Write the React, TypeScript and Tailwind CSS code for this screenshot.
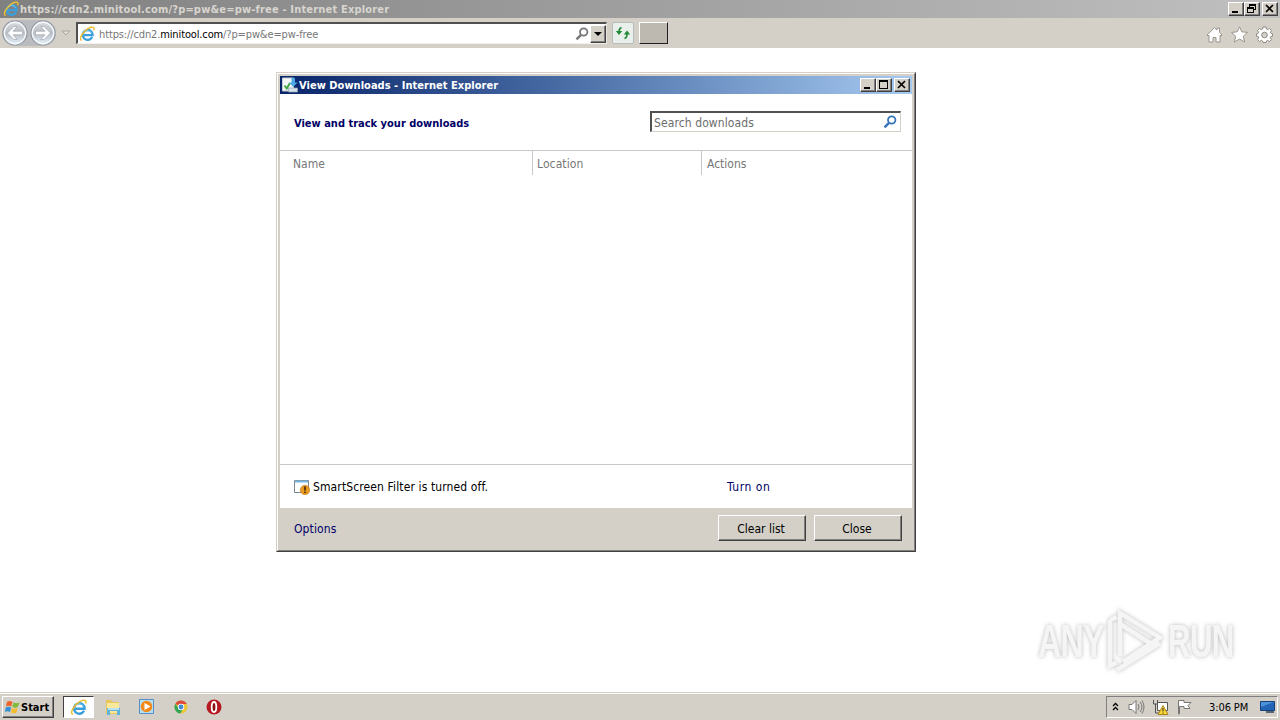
import type { ReactNode } from "react";

const raised =
  "border border-t-white border-l-white border-r-[#404040] border-b-[#404040] shadow-[inset_-1px_-1px_0_#808080] bg-[#d4d0c8]";

function IeLogo({ size }: { size: number }) {
  return (
    <svg width={size} height={size} viewBox="0 0 16 16" className="shrink-0">
      <path d="M13.2 11.1A5 4.9 0 1 1 13.7 9.2H5" fill="none" stroke="#3a9fdc" strokeWidth="2.3" />
      <path d="M4.3 7.5A4.8 4.8 0 0 1 12.8 6.8" fill="none" stroke="#7dcdf3" strokeWidth=".9" />
      <path d="M2.6 14.6C-1.3 12.8 6 2.6 12.4 1.2c2.7-.5 3.1 1.2 2.2 3.2" fill="none" stroke="#eebd30" strokeWidth="1.4" />
    </svg>
  );
}

function Magnifier({ color }: { color: string }) {
  return (
    <svg width="14" height="14" viewBox="0 0 14 14" className="shrink-0">
      <circle cx="8.7" cy="5" r="3.7" fill="#fff" stroke={color} strokeWidth="1.8" />
      <path d="M6 7.8 1.5 12.4" stroke={color} strokeWidth="2.4" />
    </svg>
  );
}

function CaptionButton({ children }: { children: ReactNode }) {
  return (
    <div className={`h-[14px] w-4 shrink-0 ${raised}`}>
      <svg width="14" height="12" viewBox="0 0 14 12" fill="none" stroke="#000" shapeRendering="crispEdges">
        {children}
      </svg>
    </div>
  );
}

const minimize = <path d="M3 9h6" strokeWidth="2" />;
const maximize = <path d="M2.5 1.5h8v8h-8zM2 2.5h9" />;
const restore = <path d="M4.5 4V1.5h6v5H8M4 2.5h7M2.5 4.5H8.5v5H2.5zM2 5.5h6" />;
const close = <path d="m3 2 7 7M10 2 3 9" strokeWidth="1.7" shapeRendering="auto" />;

function NavArrow({ back }: { back?: boolean }) {
  return (
    <svg width="26" height="26" viewBox="0 0 26 26" className={back ? "shrink-0" : "shrink-0 -scale-x-100"}>
      <defs>
        <linearGradient id={back ? "navB" : "navF"} x1="0" y1="0" x2="0" y2="1">
          <stop offset="0" stopColor="#dcdfe2" />
          <stop offset=".5" stopColor="#b8bdc3" />
          <stop offset="1" stopColor="#e6f4ff" />
        </linearGradient>
      </defs>
      <circle cx="13" cy="13" r="12" fill={back ? "url(#navB)" : "url(#navF)"} stroke="#8d959e" strokeWidth="1.1" />
      <circle cx="13" cy="13" r="10.7" fill="none" stroke="#f4f8fc" strokeWidth="1.4" />
      <path d="M5.5 13 12 6.5h3.2L11 11.2h9.500v3.6H11l4.2 4.7H12z" fill="#fff" stroke="#a2a8b0" strokeWidth=".7" />
    </svg>
  );
}

function TitleBar() {
  return (
    <div className="flex h-[18px] items-center bg-linear-to-r from-[#808080] to-[#c0c0c0] pr-0.5 pl-[3px]">
      <IeLogo size={16} />
      <span className="ml-px text-[11px] font-bold tracking-[0.18px] text-[#d8d5cf]">
        https://cdn2.minitool.com/?p=pw&amp;e=pw-free - Internet Explorer
      </span>
      <div className="ml-auto flex">
        <CaptionButton>{minimize}</CaptionButton>
        <CaptionButton>{restore}</CaptionButton>
        <div className="w-0.5" />
        <CaptionButton>{close}</CaptionButton>
      </div>
    </div>
  );
}

function Toolbar() {
  return (
    <div className="flex h-[30px] items-center bg-[#d4d0c8] pl-0.5">
      <div className="flex gap-0.5 rounded-full bg-[#b9bbbe]">
        <NavArrow back />
        <NavArrow />
      </div>
      <svg width="10" height="6" viewBox="0 0 10 6" className="ml-[5px]">
        <path d="M1 1h8L5 5z" fill="#e2dfd9" stroke="#aaa59c" />
      </svg>
      <div className="ml-[5px] flex h-[22px] w-[531px] items-center border-t-2 border-r border-b border-l-2 border-t-[#505050] border-r-[#e8e5df] border-b-[#f3f1ed] border-l-[#505050] bg-white pl-px">
        <IeLogo size={16} />
        <span className="ml-1 pt-px text-[11px] tracking-[-0.13px] text-[#777]">
          https://cdn2.<span className="text-black">minitool.com</span>/?p=pw&amp;e=pw-free
        </span>
        <div className="ml-auto flex items-center gap-px">
          <Magnifier color="#777" />
          <div className={`grid h-[18px] w-4 place-items-center ${raised}`}>
            <svg width="8" height="4" viewBox="0 0 8 4"><path d="M0 0h8L4 4z" /></svg>
          </div>
        </div>
      </div>
      <div className="ml-[5px] grid h-[22px] w-[22px] place-items-center rounded-xs border border-[#b7bdbd] bg-[#e9efeb]">
        <svg width="16" height="14" viewBox="0 0 16 14" fill="none" stroke="#238a38" strokeWidth="1.7">
          <path d="M6.5 1.5C4.5 2 4 3 4 6M9.5 12.5c2-.5 2.5-1.5 2.5-5" />
          <path d="m.8 5 3.2 4 3.2-4zM8.8 8.5 12 4.5l3.2 4z" fill="#238a38" stroke="none" />
        </svg>
      </div>
      <div className="ml-[5px] h-[22px] w-[29px] border border-t-white border-r-[#202020] border-b-[#202020] border-l-white bg-[#bdb8b0]" />
      <div className="mt-[3px] mr-[7px] ml-auto flex gap-2">
        <svg width="17" height="17" viewBox="0 0 17 17" fill="#fff" stroke="#9a968f">
          <path d="m1 9 7.5-7.3L11 4V2h2.5v4.5L16 9l-1 1-1-.7V16H10v-4.5H7V16H3V9.3L2 10z" />
        </svg>
        <svg width="17" height="17" viewBox="0 0 17 17" fill="#fff" stroke="#9a968f">
          <path d="m8.5 .8 2.3 5 5.7.6-4.2 3.9 1.3 5.7-5.1-3-5.1 3 1.3-5.7L.5 6.4l5.7-.6z" />
        </svg>
        <svg width="17" height="17" viewBox="0 0 17 17" fill="#fff" stroke="#8f8b84">
          <path d="M7 1h3l.4 2 1.3.6L13.5 2.5l2 2-1.1 1.8.6 1.2 1.5.3v2.4l-1.7.4-.5 1.3 1.2 1.7-2 2-1.8-1.2-1.3.6L10 16.5H7L6.6 15l-1.3-.6-1.8 1.2-2-2 1.2-1.7-.5-1.3L.5 10.2V7.8L2 7.5l.6-1.2L1.5 4.5l2-2 1.8 1.1L6.6 3z" />
          <circle cx="8.5" cy="9" r="2.8" fill="#d4d0c8" />
        </svg>
      </div>
    </div>
  );
}

function PushButton({ label }: { label: string }) {
  return (
    <button className={`h-[26px] w-[88px] pt-px pr-0.5 text-[12px] ${raised}`}>{label}</button>
  );
}

function DownloadsDialog() {
  return (
    <div className="absolute top-[72px] left-[276px] h-[480px] w-[640px] border border-t-[#d4d0c8] border-r-[#404040] border-b-[#404040] border-l-[#d4d0c8]">
      <div className="flex h-full flex-col border border-t-white border-r-[#808080] border-b-[#808080] border-l-white bg-[#d4d0c8] p-0.5">
        <div className="flex h-[18px] shrink-0 items-center bg-linear-to-r from-[#0a246a] to-[#a6caf0] pr-0.5 pl-0.5">
          <svg width="16" height="16" viewBox="0 0 16 16" className="shrink-0">
            <path d="M.5 1h11v13H.5z" fill="#f4f7f8" stroke="#c5ced3" />
            <path d="m2.5 8.500 2.200 3L8 6" fill="none" stroke="#45a847" strokeWidth="2" />
            <path d="M9.500 1h3.500v4.500h2.500l-4.200 4.500L7 5.500h2.500z" fill="#4ba8e4" />
            <path d="M6.500 11h9v4h-9z" fill="#d7e1e8" stroke="#8fa3b2" strokeWidth=".7" />
          </svg>
          <span className="ml-px text-[11px] font-bold tracking-[0.03px] text-white">View Downloads - Internet Explorer</span>
          <div className="ml-auto flex">
            <CaptionButton>{minimize}</CaptionButton>
            <CaptionButton>{maximize}</CaptionButton>
            <div className="w-0.5" />
            <CaptionButton>{close}</CaptionButton>
          </div>
        </div>
        <div className="flex h-[56px] shrink-0 items-center justify-between bg-white pr-[11px] pb-0.5 pl-[14px]">
          <h1 className="pt-[5px] text-[11px] font-bold text-[#000066]">View and track your downloads</h1>
          <div className="flex h-[21px] w-[251px] items-center justify-between border-t-2 border-r border-b border-l-2 border-t-[#505050] border-r-[#d4d0c8] border-b-[#d4d0c8] border-l-[#505050] pr-[3px] pl-0.5">
            <span className="pt-[2px] text-[12px] tracking-[0.1px] text-[#6d6d6d]">Search downloads</span>
            <Magnifier color="#3675b9" />
          </div>
        </div>
        <div className="flex flex-1 items-start border-y border-[#c8c8c8] bg-white text-[12px] text-[#777]">
          <div className="flex h-6 w-[253px] items-center border-r border-[#c8c8c8] pt-px pl-[13px]">Name</div>
          <div className="flex h-6 w-[169px] items-center border-r border-[#c8c8c8] pt-px pl-1 tracking-[0.1px]">Location</div>
          <div className="flex h-6 items-center pt-px pl-[5px]">Actions</div>
        </div>
        <div className="flex h-[43px] shrink-0 items-center bg-white pl-[14px] text-[12px]">
          <svg width="16" height="16" viewBox="0 0 16 16">
            <path d="M.5 1.5h14v12H.5z" fill="#fff" stroke="#7d8790" />
            <path d="M1 2.5h13" stroke="#79b7dc" strokeWidth="2" />
            <circle cx="11" cy="11" r="4.7" fill="#e99b20" stroke="#bf7513" strokeWidth=".6" />
            <path d="M11 7.5v4M11 12.5v1.5" stroke="#492b0b" strokeWidth="1.7" />
          </svg>
          <span className="ml-[3px] w-[414px] tracking-[0.12px]">SmartScreen Filter is turned off.</span>
          <a className="tracking-[0.55px] text-[#000066]">Turn on</a>
        </div>
        <div className="flex h-[40px] shrink-0 items-center gap-2 pr-[10px] pl-[14px]">
          <a className="mr-auto pt-0.5 text-[12px] tracking-[0.1px] text-[#000066]">Options</a>
          <PushButton label="Clear list" />
          <PushButton label="Close" />
        </div>
      </div>
    </div>
  );
}

function Watermark() {
  return (
    <div className="absolute top-[606px] left-[1038px] flex h-[70px] w-[198px] items-center justify-between text-[#f5f5f5] drop-shadow-[0_0_2px_#bbb]">
      <span className="w-[66px] origin-left scale-x-[.7] font-['Liberation_Sans'] text-[46px] font-bold tracking-[-1px]">ANY</span>
      <svg width="64" height="68" viewBox="0 0 64 68" fill="none" stroke="currentColor" strokeWidth="4.5" className="-ml-1 shrink-0">
        <path d="M18 49V6l40 24.500-37 24.500M8 13v46l6-3.500M8 13l7-3M18 17l33 21M15 63l43-27" />
      </svg>
      <span className="w-[68px] origin-left scale-x-[.68] font-['Liberation_Sans'] text-[46px] font-bold tracking-[-1px]">RUN</span>
    </div>
  );
}

function Taskbar() {
  return (
    <div className="flex h-7 items-center border-t border-[#d4d0c8] bg-[#d4d0c8] pt-px pr-0.5 pl-0.5 shadow-[inset_0_1px_0_#fff]">
      <button className={`flex h-[22px] w-[52px] items-center pl-0.5 text-[11px] font-bold ${raised}`}>
        <svg width="16" height="16" viewBox="0 0 16 16" className="shrink-0">
          <path d="M2 3c2-1.5 4-1 5.5 0L6.3 7.5C4.5 6.5 3 6.5 1 7.5z" fill="#ee642b" />
          <path d="M8.5 3.5c2 1.2 4 1 6-.3L13 7.8c-2 1.3-4 1-5.7.1z" fill="#81ba3a" />
          <path d="M.8 8.5c2-1.3 3.7-1 5.3 0L5 13c-2-1.2-3.7-1-5.2 0z" fill="#3391d3" />
          <path d="M7 9c2 1.2 4 1 5.8-.2L11.5 13.5c-2 1.2-4 1-5.7 0z" fill="#f6bc2d" />
        </svg>
        <span>Start</span>
      </button>
      <div className="ml-[9px] grid h-[22px] w-[31px] place-items-center border border-t-[#404040] border-r-white border-b-white border-l-[#404040] bg-white">
        <IeLogo size={17} />
      </div>
      <svg width="18" height="18" viewBox="0 0 18 18" className="ml-[10px]">
        <path d="M2 2h5l1 2h7v12H2z" fill="#eac55c" />
        <path d="M3 5h12v10H3z" fill="#fae99c" />
        <path d="M3 10h13v7h-3v-4H6v4H3z" fill="#60b4db" />
        <path d="M4 10h11v2H4z" fill="#b8e2f2" />
      </svg>
      <svg width="18" height="18" viewBox="0 0 18 18" className="ml-4">
        <path d="M1.5 1.5h14v14h-14z" fill="#b9dff6" stroke="#4f91c8" />
        <circle cx="8.5" cy="8.5" r="5.8" fill="#f28a19" />
        <path d="m6.5 5 6 3.5-6 3.5z" fill="#fff" />
      </svg>
      <svg width="16" height="16" viewBox="0 0 16 16" className="ml-[17px]">
        <circle cx="8" cy="8" r="6.5" fill="#efc637" />
        <path d="M8 8 2.4 4.7A6.5 6.5 0 0 1 13.8 5H8z" fill="#db4a3d" />
        <path d="M2.4 4.7A6.5 6.5 0 0 0 7.3 14.5L10 10H6z" fill="#34a456" />
        <circle cx="8" cy="8" r="3.2" fill="#fff" />
        <circle cx="8" cy="8" r="2.4" fill="#428bd5" />
      </svg>
      <svg width="16" height="16" viewBox="0 0 16 16" className="ml-[17px]">
        <circle cx="8" cy="8" r="7.5" fill="#b51820" />
        <ellipse cx="8" cy="8" rx="2.3" ry="5" fill="#8b1117" stroke="#fff" strokeWidth="1.8" />
      </svg>
      <div className="ml-auto flex h-[22px] w-[172px] items-center border border-t-[#808080] border-r-white border-b-white border-l-[#808080] pl-[5px]">
        <svg width="7" height="10" viewBox="0 0 7 10" fill="none" stroke="#000" strokeWidth="1.3">
          <path d="m1 4 2.5-2.5L6 4M1 8l2.5-2.5L6 8" />
        </svg>
        <svg width="17" height="16" viewBox="0 0 17 16" fill="none" stroke="#777" className="ml-[9px]">
          <path d="M1 5.5h3l4-4v13l-4-4H1z" fill="#fff" />
          <path d="M10 5q2 3 0 6M12 3q4 5 0 10M14 1.5q4 6.5 0 13" />
        </svg>
        <svg width="17" height="17" viewBox="0 0 17 17" fill="#fff" stroke="#555" className="ml-[7px]">
          <path d="M5.5 3.5h10v8h-10z" />
          <path d="M1.5 1v4h4V1M3.5 5v9h4" fill="none" />
          <path d="m11 6.5 5 9H6z" fill="#fbd733" stroke="#a8851d" />
          <path d="M11 9v3.5M11 13.5v1" stroke="#222" />
        </svg>
        <svg width="17" height="16" viewBox="0 0 17 16" fill="#fff" stroke="#777" className="ml-[7px]">
          <path d="M2.500 15V1.5h5.500v2h7l-3 3 2 3H8v-2H3.500V15z" />
        </svg>
        <span className="ml-4 pt-px text-[11px] tracking-[-0.1px] whitespace-nowrap">3:06 PM</span>
        <svg width="16" height="14" viewBox="0 0 16 14" className="mr-px ml-auto">
          <path d="M.5 1.5h14v9H.5z" fill="#2164b6" stroke="#164077" />
          <path d="M1 2h13L1 7z" fill="#4c91da" />
          <path d="M6 11h8v2H6z" fill="#566676" />
        </svg>
      </div>
    </div>
  );
}

export default function App() {
  return (
    <div className="relative flex h-screen w-screen flex-col overflow-hidden bg-white font-['DejaVu_Sans_Condensed','DejaVu_Sans',sans-serif] leading-none text-black">
      <TitleBar />
      <Toolbar />
      <main className="flex-1" />
      <Taskbar />
      <DownloadsDialog />
      <Watermark />
    </div>
  );
}
